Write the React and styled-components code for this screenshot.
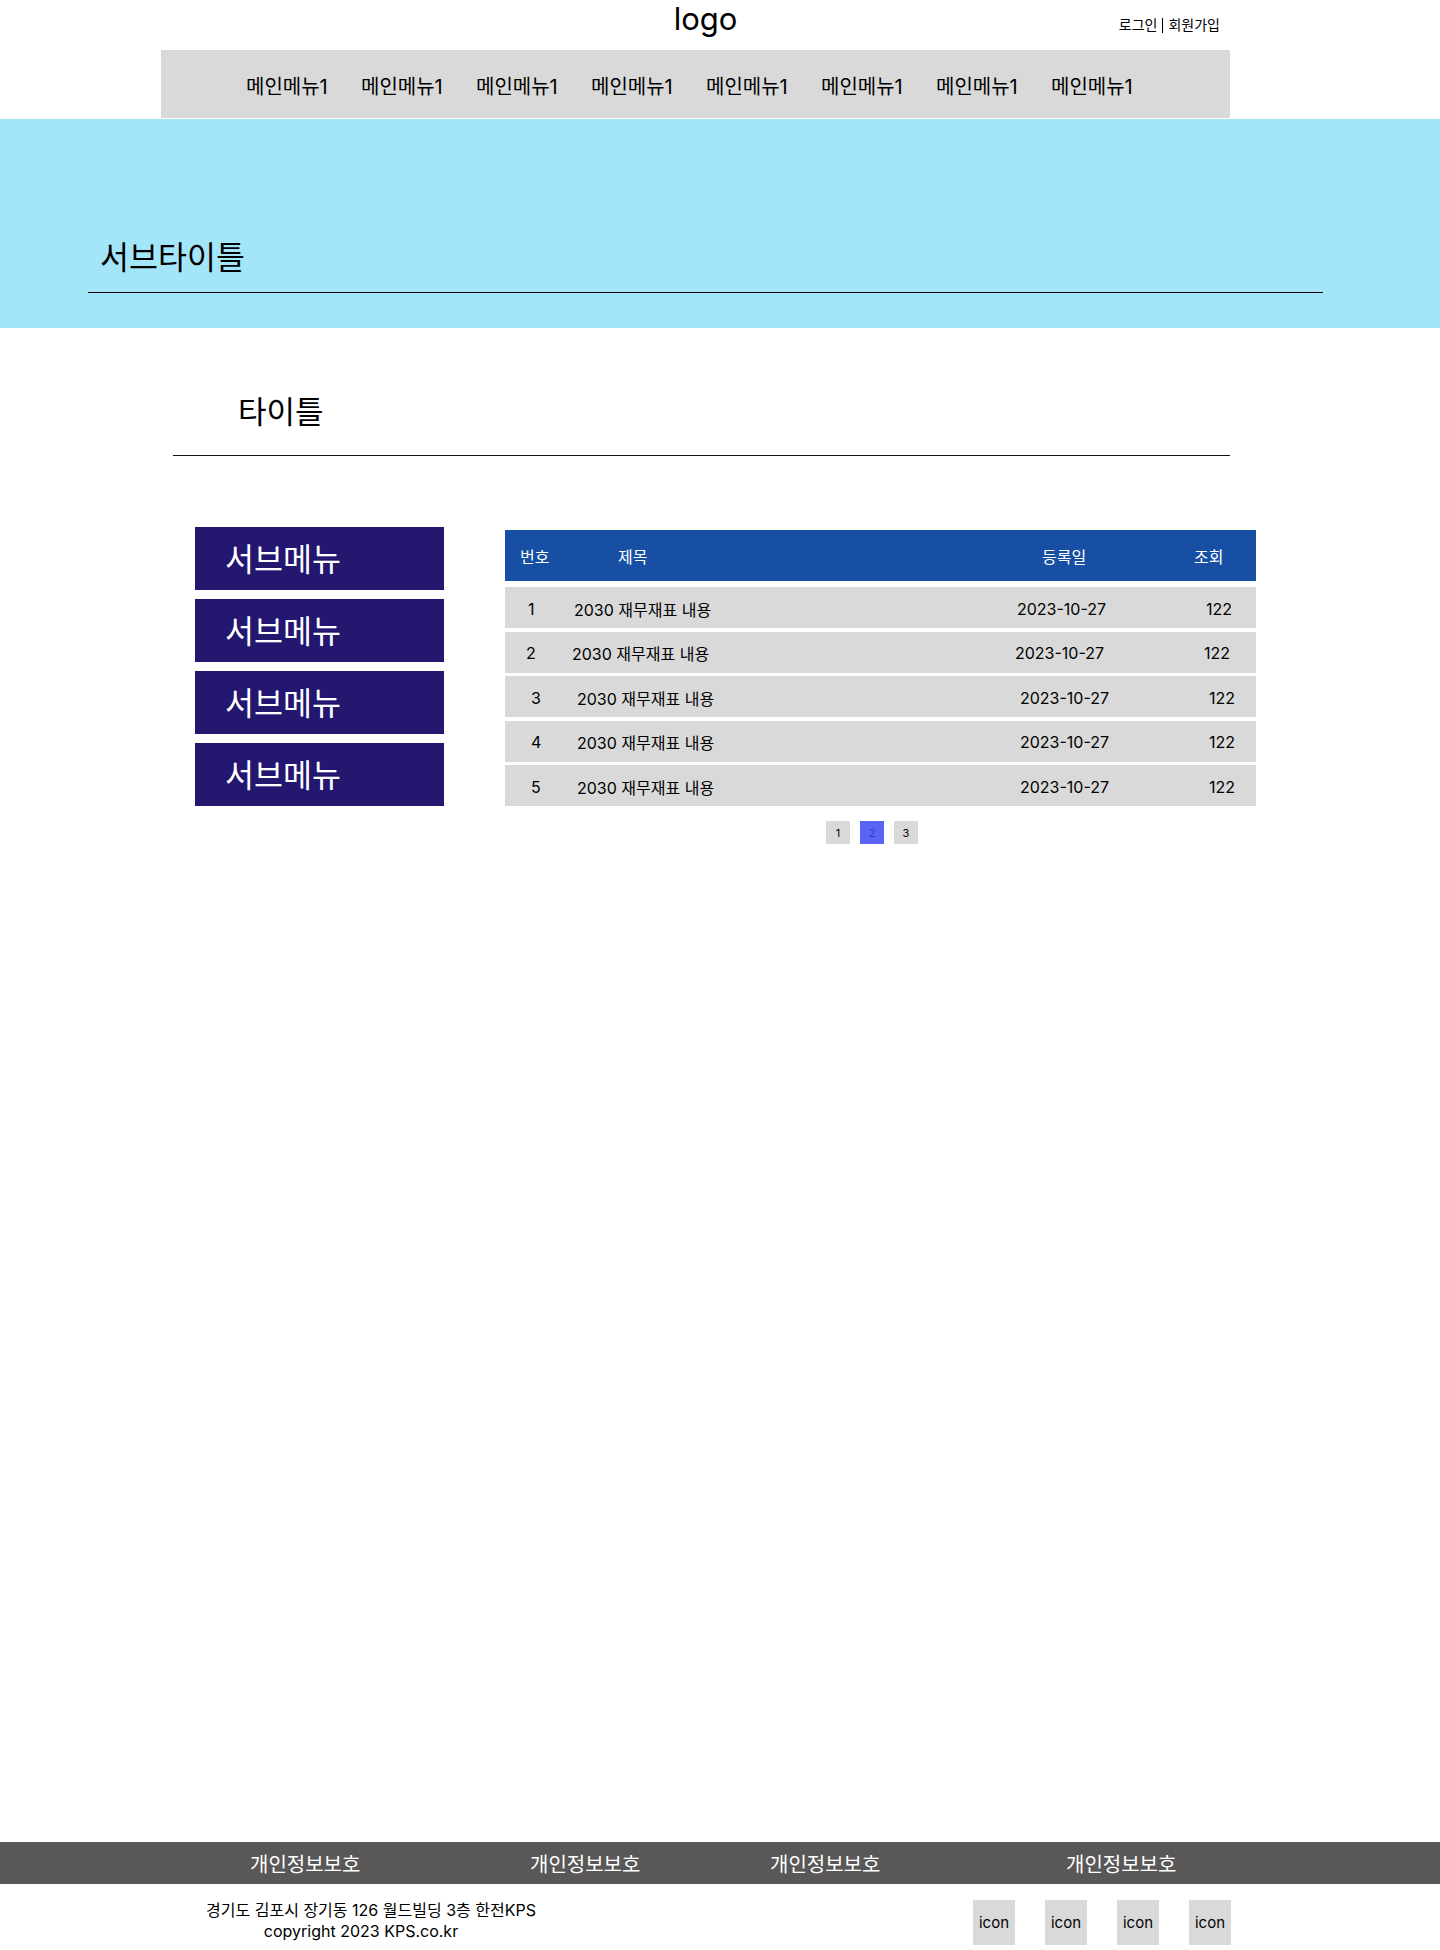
import styled, { createGlobalStyle } from "styled-components";

const rows = [
  { no: 1, title: "2030 재무재표 내용", date: "2023-10-27", views: 122, shift: -3 },
  { no: 2, title: "2030 재무재표 내용", date: "2023-10-27", views: 122, shift: -5 },
  { no: 3, title: "2030 재무재표 내용", date: "2023-10-27", views: 122, shift: 0 },
  { no: 4, title: "2030 재무재표 내용", date: "2023-10-27", views: 122, shift: 0 },
  { no: 5, title: "2030 재무재표 내용", date: "2023-10-27", views: 122, shift: 0 },
];

const menus = Array.from({ length: 8 }, () => "메인메뉴1");
const subMenus = Array.from({ length: 4 }, () => "서브메뉴");

const App = () => {
  return (
    <>
      <GlobalStyle />
      <Header>
        <TopRow>
          <span />
          <Logo>logo</Logo>
          <Auth>
            로그인
            <Divider />
            회원가입
          </Auth>
        </TopRow>
        <Nav>
          {menus.map((m, i) => (
            <NavItem key={i}>{m}</NavItem>
          ))}
        </Nav>
      </Header>

      <Banner>
        <BannerInner>
          <SubTitle>서브타이틀</SubTitle>
        </BannerInner>
      </Banner>

      <Main>
        <Section>
          <PageTitle>타이틀</PageTitle>
        </Section>

        <Body>
          <Sidebar>
            {subMenus.map((s, i) => (
              <SideItem key={i}>{s}</SideItem>
            ))}
          </Sidebar>

          <Board>
            <HeadRow>
              <span>번호</span>
              <span>제목</span>
              <span>등록일</span>
              <span>조회</span>
            </HeadRow>
            {rows.map((r) => (
              <Row key={r.no} shift={r.shift}>
                <span>{r.no}</span>
                <span>{r.title}</span>
                <span>{r.date}</span>
                <span>{r.views}</span>
              </Row>
            ))}
            <Pager>
              <PageBtn>1</PageBtn>
              <PageBtn active>2</PageBtn>
              <PageBtn>3</PageBtn>
            </Pager>
          </Board>
        </Body>
      </Main>

      <Footer>
        <FooterBar>
          <span>개인정보보호</span>
          <span>개인정보보호</span>
          <span>개인정보보호</span>
          <span>개인정보보호</span>
        </FooterBar>
        <FooterBottom>
          <Address>
            <AddressLine>경기도 김포시 장기동 126 월드빌딩 3층 한전KPS</AddressLine>
            <AddressLine indent={20}>copyright 2023 KPS.co.kr</AddressLine>
          </Address>
          <Icons>
            {[0, 1, 2, 3].map((i) => (
              <IconBox key={i}>icon</IconBox>
            ))}
          </Icons>
        </FooterBottom>
      </Footer>
    </>
  );
};

const GlobalStyle = createGlobalStyle`
  * {
    box-sizing: border-box;
  }

  body {
    margin: 0;
    background: #ffffff;
    color: #000000;
    font-family: Inter, "Noto Sans CJK KR", sans-serif;
  }
`;

const Header = styled.header`
  width: 1069px;
  margin-left: 161px;
`;

const TopRow = styled.div`
  height: 50px;
  display: grid;
  grid-template-columns: 1fr auto 1fr;
  align-items: center;
  padding-left: 20px;
`;

const Logo = styled.div`
  align-self: start;
  margin-top: 4px;
  font-size: 31px;
  line-height: 30px;
`;

const Auth = styled.div`
  justify-self: end;
  display: flex;
  align-items: center;
  margin-right: 10px;
  font-size: 14px;
  line-height: 16px;
`;

const Divider = styled.i`
  width: 1px;
  height: 15px;
  background: #000000;
  margin: 0 5px;
`;

const Nav = styled.nav`
  height: 68px;
  display: flex;
  align-items: center;
  padding: 5px 0 0 85px;
  background: #d9d9d9;
`;

const NavItem = styled.a`
  width: 115px;
  font-size: 20px;
  line-height: 24px;
  color: #000000;
`;

const Banner = styled.section`
  height: 209px;
  margin-top: 1px;
  background: #a4e6f9;
  display: flex;
  align-items: flex-end;
  padding-bottom: 35px;
`;

const BannerInner = styled.div`
  width: 1235px;
  margin-left: 88px;
  border-bottom: 1px solid #000000;
  padding: 0 0 16px 12px;
`;

const SubTitle = styled.h2`
  margin: 0;
  font-size: 31.5px;
  font-weight: 400;
  line-height: 36px;
`;

const Main = styled.main`
  min-height: 1514px;
  padding-top: 66px;
`;

const Section = styled.div`
  width: 1057px;
  margin-left: 173px;
  border-bottom: 1px solid #111111;
  padding: 0 0 25px 65px;
`;

const PageTitle = styled.h3`
  margin: 0;
  font-size: 31px;
  font-weight: 400;
  line-height: 36px;
`;

const Body = styled.div`
  display: flex;
  align-items: flex-start;
  gap: 61px;
  margin: 71px 0 0 195px;
`;

const Sidebar = styled.ul`
  list-style: none;
  margin: 0;
  padding: 0;
  width: 249px;
  display: flex;
  flex-direction: column;
  gap: 9px;
`;

const SideItem = styled.li`
  height: 63px;
  display: flex;
  align-items: center;
  padding: 0 0 4px 30px;
  background: #23176f;
  color: #ffffff;
  font-size: 31.5px;
`;

const Board = styled.div`
  width: 751px;
  margin-top: 3px;
`;

const HeadRow = styled.div`
  height: 51px;
  display: grid;
  grid-template-columns: 98px 424px 152px auto;
  align-items: center;
  padding-left: 15px;
  background: #164fa3;
  color: #ffffff;
  font-size: 16px;
  margin-bottom: 6px;
`;

const Row = styled.div`
  height: 41px;
  display: grid;
  grid-template-columns: 46px 443px 189px auto;
  align-items: center;
  padding: 2px 0 0 ${({ shift }) => 26 + shift}px;
  background: #d9d9d9;
  font-size: 16px;

  & + & {
    margin-top: 3.5px;
  }
`;

const Pager = styled.div`
  display: flex;
  justify-content: center;
  gap: 10px;
  margin-top: 15px;
  padding-right: 17px;
`;

const PageBtn = styled.button`
  width: 24px;
  height: 23px;
  border: 0;
  padding: 0;
  font-family: inherit;
  font-size: 11px;
  background: ${({ active }) => (active ? "#5b63f5" : "#d9d9d9")};
  color: ${({ active }) => (active ? "#3c3fb2" : "#000000")};
`;

const Footer = styled.footer``;

const FooterBar = styled.div`
  height: 42px;
  display: grid;
  grid-template-columns: 280px 240px 296px auto;
  align-items: center;
  padding-left: 250px;
  background: #595757;
  color: #ffffff;
  font-size: 20px;
`;

const FooterBottom = styled.div`
  height: 66px;
  display: flex;
  justify-content: space-between;
  align-items: flex-start;
  padding: 16px 209px 0 196px;
`;

const Address = styled.div`
  width: 350px;
  text-align: center;
  font-size: 16px;
  line-height: 21px;
`;

const AddressLine = styled.p`
  margin: 0;
  padding-right: ${({ indent }) => indent || 0}px;
  white-space: nowrap;
`;

const Icons = styled.div`
  display: flex;
  gap: 30px;
`;

const IconBox = styled.div`
  width: 42px;
  height: 45px;
  display: flex;
  align-items: center;
  justify-content: center;
  background: #d9d9d9;
  font-size: 15px;
`;

export default App;
